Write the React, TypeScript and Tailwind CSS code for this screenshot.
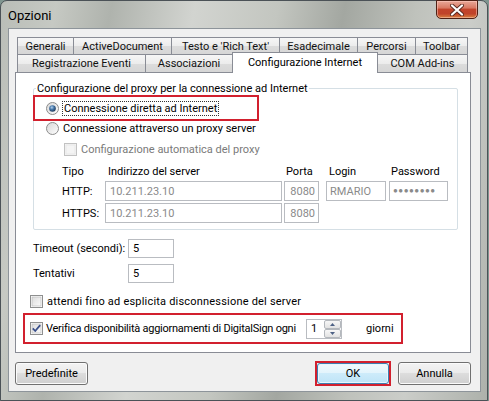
import React from "react";

function Radio({ checked }: { checked?: boolean }) {
  return (
    <svg width="13" height="13" viewBox="0 0 13 13" className="shrink-0">
      <defs>
        <linearGradient id="rbg" x1="0" y1="0" x2="1" y2="1">
          <stop offset="0" stopColor="#d6d6d6" />
          <stop offset="1" stopColor="#ffffff" />
        </linearGradient>
        <radialGradient id="rdot" cx="0.4" cy="0.35" r="0.7">
          <stop offset="0" stopColor="#b6d3f0" />
          <stop offset="0.45" stopColor="#4576a8" />
          <stop offset="1" stopColor="#1b3554" />
        </radialGradient>
      </defs>
      <circle cx="6.5" cy="6.5" r="6" fill="url(#rbg)" stroke="#8c8c8c" />
      {checked && <circle cx="6.5" cy="6.5" r="3.3" fill="url(#rdot)" />}
    </svg>
  );
}

function Check({ checked, disabled }: { checked?: boolean; disabled?: boolean }) {
  return (
    <svg width="13" height="13" viewBox="0 0 13 13" className="shrink-0">
      <defs>
        <linearGradient id="cbg" x1="0" y1="0" x2="1" y2="1">
          <stop offset="0" stopColor="#dcdcdc" />
          <stop offset="1" stopColor="#fbfbfb" />
        </linearGradient>
      </defs>
      <rect
        x="0.5"
        y="0.5"
        width="12"
        height="12"
        fill={disabled ? "#f4f4f4" : "#ffffff"}
        stroke={disabled ? "#c2c2c2" : "#8e8f8f"}
      />
      <rect x="2" y="2" width="9" height="9" fill={disabled ? "#f4f4f4" : "url(#cbg)"} stroke={disabled ? "#e2e2e2" : "#b4b4b4"} strokeWidth="0.6" />
      {checked && (
        <path d="M2.8 6.4 L5.2 9 L10.2 3.2" fill="none" stroke="#3a4f8a" strokeWidth="1.8" strokeLinejoin="round" />
      )}
    </svg>
  );
}

function Arrow({ up }: { up?: boolean }) {
  return (
    <svg width="5" height="3" viewBox="0 0 5 3">
      {up ? <path d="M0 3 L2.5 0 L5 3 Z" fill="#4d6185" /> : <path d="M0 0 L2.5 3 L5 0 Z" fill="#4d6185" />}
    </svg>
  );
}

const tabBase =
  "h-full flex items-center justify-center border-t border-l border-r border-[#898c95] bg-[linear-gradient(#f6f6f6_0%,#ececec_50%,#dcdcdc_51%,#d6d6d6_100%)] text-[#111] whitespace-nowrap";

const btnBase =
  "h-[23px] rounded-[3px] border border-[#707070] flex items-center justify-center text-[11px] text-black shadow-[inset_0_0_0_1px_#fbfbfb] bg-[linear-gradient(#f3f3f3_0%,#ebebeb_45%,#dddddd_50%,#cfcfcf_100%)]";

const inputDis =
  "h-[20px] border border-[#b9bcc1] bg-white flex items-center text-[#8a8a8a]";

export default function App() {
  return (
    <div className="w-[489px] h-[401px] bg-[#7f958f] font-['Roboto',sans-serif] text-[11px] leading-none text-black overflow-hidden whitespace-nowrap">
      <div className="w-[488px] h-[401px] rounded-t-[7px] border border-[#4b5257] flex flex-col pl-[7px] pr-[6px] pb-[8px] bg-[linear-gradient(100deg,#b9bdb7_0%,#c6c9c3_10%,#afb3ad_20%,#d2d4d0_35%,#c3c6c0_50%,#a3a7a1_62%,#bfc2bc_75%,#cbcdc9_85%,#adb1ab_100%)]">
        {/* Title bar */}
        <div className="h-[27px] flex justify-between">
          <div className="flex items-center text-[13px] text-black pt-[1px]">Opzioni</div>
          <div className="-mt-px mr-[3px] w-[42px] h-[19px] rounded-b-[5px] border border-[#4f2115] flex items-center justify-center shadow-[inset_0_0_0_1px_rgba(255,210,200,0.5)] bg-[linear-gradient(#e9a898_0%,#d97a64_40%,#c2442b_50%,#c0432a_75%,#d8823f_100%)]">
            <svg width="14" height="12" viewBox="0 0 14 12">
              <path d="M2 1.5 L12 10.5 M12 1.5 L2 10.5" stroke="#5a2a20" strokeWidth="4" strokeLinecap="round" />
              <path d="M2 1.5 L12 10.5 M12 1.5 L2 10.5" stroke="#ffffff" strokeWidth="2.2" strokeLinecap="round" />
            </svg>
          </div>
        </div>

        {/* Client area */}
        <div className="flex-1 bg-[#f0f0f0] border border-[#8d949a] pt-[8px] pl-[6px] flex flex-col">
          {/* Tabs */}
          <div className="w-[456px]">
            <div className="ml-[2px] flex h-[17px]">
              <div className={`${tabBase} w-[57px]`}>Generali</div>
              <div className={`${tabBase} w-[99px] -ml-px`}>ActiveDocument</div>
              <div className={`${tabBase} w-[109px] -ml-px`}>Testo e 'Rich Text'</div>
              <div className={`${tabBase} w-[79px] -ml-px`}>Esadecimale</div>
              <div className={`${tabBase} w-[59px] -ml-px`}>Percorsi</div>
              <div className={`${tabBase} w-[53px] -ml-px`}>Toolbar</div>
            </div>
            <div className="ml-[2px] flex h-[18px] items-start">
              <div className={`${tabBase} w-[129px]`}>Registrazione Eventi</div>
              <div className={`${tabBase} w-[88px] -ml-px`}>Associazioni</div>
              <div className="relative z-10 -ml-px -mt-[2px] w-[146px] h-[21px] bg-white border-t border-l border-r border-[#898c95] flex items-center justify-center pb-[1px]">
                Configurazione Internet
              </div>
              <div className={`${tabBase} w-[91px] -ml-px`}>COM Add-ins</div>
            </div>

            {/* Panel */}
            <div className="w-[456px] h-[281px] bg-white border border-[#898c95] flex flex-col">
              {/* Group box */}
              <div className="relative mt-[15px] ml-[17px] w-[425px] h-[142px] border border-[#d5dfe5] rounded-[2px] flex flex-col">
                <span className="absolute left-[2px] -top-[7px] px-[1px] bg-white leading-[13px]">
                  Configurazione del proxy per la connessione ad Internet
                </span>
                <div className="-ml-px mt-[6px] w-[226px] h-[26px] border-2 border-[#d2202e] flex items-center pl-[11px] gap-[3px]">
                  <Radio checked />
                  <span className="border border-dotted border-[#333] px-[1px] leading-[13px]">
                    Connessione diretta ad Internet
                  </span>
                </div>
                <div className="h-[14px] flex items-center pl-[12px] gap-[4px]">
                  <Radio />
                  <span>Connessione attraverso un proxy server</span>
                </div>
                <div className="mt-[7px] h-[14px] flex items-center pl-[30px] gap-[4px]">
                  <Check disabled />
                  <span className="text-[#7a7a7a]">Configurazione automatica del proxy</span>
                </div>
                <div className="mt-[8px] pl-[28px] grid grid-cols-[43px_179px_42px_63px_59px] items-center">
                  <div className="h-[14px] flex items-center">Tipo</div>
                  <div className="h-[14px] flex items-center pl-[3px]">Indirizzo del server</div>
                  <div className="h-[14px] flex items-center pl-[2px]">Porta</div>
                  <div className="h-[14px] flex items-center pl-[3px]">Login</div>
                  <div className="h-[14px] flex items-center pl-[2px]">Password</div>

                  <div className="mt-[3px]">HTTP:</div>
                  <div className={`mt-[3px] w-[177px] pl-[4px] ${inputDis}`}>10.211.23.10</div>
                  <div className={`mt-[3px] w-[35px] justify-end pr-[3px] ${inputDis}`}>8080</div>
                  <div className={`mt-[3px] w-[60px] pl-[3px] ${inputDis}`}>RMARIO</div>
                  <div className={`mt-[3px] w-[59px] pl-[3px] ${inputDis} text-[8px] tracking-[0.5px]`}>●●●●●●●●</div>

                  <div className="mt-[2px]">HTTPS:</div>
                  <div className={`mt-[2px] w-[177px] pl-[4px] ${inputDis}`}>10.211.23.10</div>
                  <div className={`mt-[2px] w-[35px] justify-end pr-[3px] ${inputDis}`}>8080</div>
                  <div />
                  <div />
                </div>
              </div>

              {/* Timeout */}
              <div className="mt-[9px] pl-[17px] flex items-center h-[19px]">
                <span className="w-[95px]">Timeout (secondi):</span>
                <div className="w-[46px] h-[19px] border border-[#b9bcc1] flex items-center pl-[4px]">5</div>
              </div>
              <div className="mt-[6px] pl-[17px] flex items-center h-[19px]">
                <span className="w-[95px]">Tentativi</span>
                <div className="w-[46px] h-[19px] border border-[#b9bcc1] flex items-center pl-[4px]">5</div>
              </div>
              <div className="mt-[12px] pl-[14px] flex items-center h-[13px] gap-[4px]">
                <Check />
                <span className="tracking-[0.2px]">attendi fino ad esplicita disconnessione del server</span>
              </div>

              {/* Red box 2 */}
              <div className="mt-[5px] ml-[7px] w-[380px] h-[31px] border-2 border-[#d2202e] flex items-center pl-[5px]">
                <Check checked />
                <span className="ml-[3px] w-[260px] shrink-0 tracking-[-0.25px]">Verifica disponibilità aggiornamenti di DigitalSign ogni</span>
                <div className="w-[36px] h-[20px] shrink-0 border border-[#b9bcc1] flex">
                  <div className="flex-1 flex items-center pl-[4px]">1</div>
                  <div className="w-[17px] flex flex-col">
                    <div className="flex-1 border border-[#b4b8bd] rounded-[2px] bg-[linear-gradient(#f7f7f7,#e2e2e2)] flex items-center justify-center">
                      <Arrow up />
                    </div>
                    <div className="flex-1 border border-[#b4b8bd] rounded-[2px] bg-[linear-gradient(#f7f7f7,#e2e2e2)] flex items-center justify-center">
                      <Arrow />
                    </div>
                  </div>
                </div>
                <span className="ml-[24px]">giorni</span>
              </div>
            </div>
          </div>

          {/* Buttons */}
          <div className="mt-[8px] w-[456px] flex items-center">
            <div className={`${btnBase} w-[73px]`}>Predefinite</div>
            <div className="ml-auto w-[76px] h-[25px] border-2 border-[#d2202e] flex">
              <div className="flex-1 rounded-[3px] border border-[#3c7fb1] flex items-center justify-center shadow-[inset_0_0_0_1px_#e8f6fd] bg-[linear-gradient(#f0f9fe_0%,#e3f4fc_45%,#cdebfa_50%,#bfe4f7_100%)]">
                OK
              </div>
            </div>
            <div className={`${btnBase} w-[73px] ml-[7px]`}>Annulla</div>
          </div>
        </div>
      </div>
    </div>
  );
}
